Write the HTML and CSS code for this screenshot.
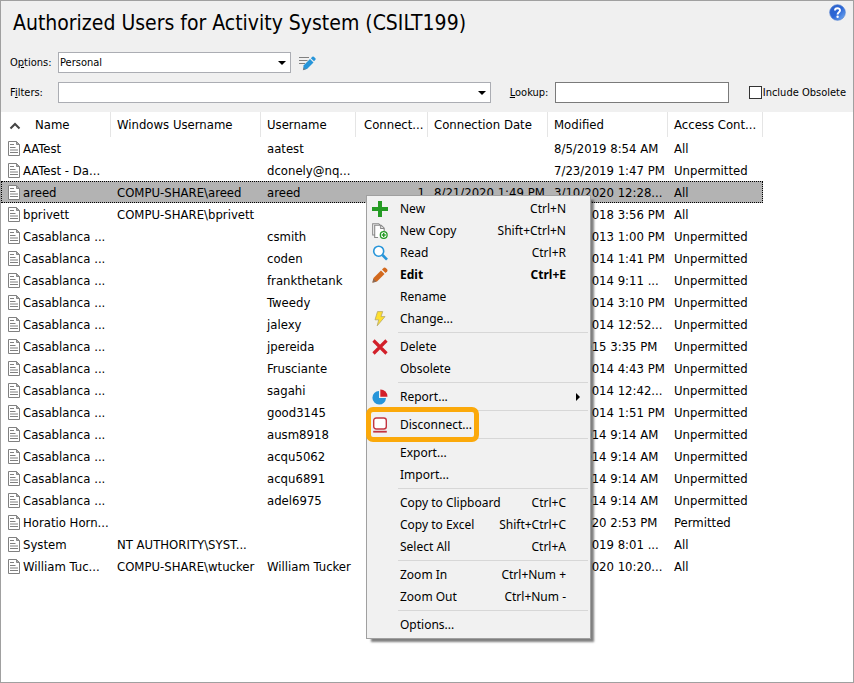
FILE: index.html
```html
<!DOCTYPE html>
<html lang="en">
<head>
<meta charset="utf-8">
<title>Authorized Users for Activity System (CSILT199)</title>
<link rel="stylesheet" href="styles.css">
</head>
<body>

<svg class="sprite" aria-hidden="true">
  <symbol id="doc" viewBox="0 0 12 15">
    <path d="M.5.5h8l3 3v11H.5z" fill="#fff" stroke="#808080"/>
    <path d="M8.500.5v3h3z" fill="#aaa" stroke="#888"/>
    <path d="M2 3.500h4M2 6.500h5.500M2 9h8M2 11.500h8" stroke="#808080"/>
  </symbol>
</svg>

<header class="header">
  <div class="title-row">
    <h1>Authorized Users for Activity System (CSILT199)</h1>
    <button class="icon-button help" type="button" aria-label="Help">
      <svg width="17" height="17" viewBox="0 0 17 17">
        <defs>
          <linearGradient id="ball" x1="0" y1="0" x2="1" y2="1">
            <stop offset="0" stop-color="#2e62c8"/>
            <stop offset="0.5" stop-color="#2b66d6"/>
            <stop offset="1" stop-color="#7db4f5"/>
          </linearGradient>
        </defs>
        <circle cx="8.5" cy="8.5" r="7.8" fill="url(#ball)" stroke="#4a7bd0" stroke-width=".7"/>
        <path d="M6 6.600C6 3.400 11 3.500 11 6.400C11 8.300 8.600 8.200 8.600 10.400" fill="none" stroke="#fff" stroke-width="2"/>
        <circle cx="8.600" cy="12.700" r="1.200" fill="#fff"/>
      </svg>
    </button>
  </div>

  <div class="form-row">
    <label class="row-label" for="options">O<u>p</u>tions:</label>
    <span class="combo combo-options">
      <select id="options"><option>Personal</option></select>
    </span>
    <button class="icon-button" type="button" aria-label="Edit options">
      <svg width="18" height="16" viewBox="0 0 18 16">
        <path d="M0 2.500h10M0 5.500h8.500M0 8.500h6" stroke="#808080" stroke-width="1.200"/>
        <path d="M4.500 10.500L11 4l3.500 3.500L8 14l-3.700.8z" fill="#2795d9"/>
        <path d="M11.800 3.200l1.500-1.500q.8-.6 1.500 0l1.600 1.600q.7.800 0 1.500l-1.400 1.500z" fill="#2795d9"/>
        <path d="M3.800 15.200l.8-3 2.200 2.200z" fill="#6b7f8c"/>
      </svg>
    </button>
  </div>

  <div class="form-row">
    <label class="row-label" for="filters">F<u>i</u>lters:</label>
    <span class="combo combo-filters">
      <select id="filters"><option></option></select>
    </span>
    <label class="lookup-label" for="lookup"><u>L</u>ookup:</label>
    <input class="lookup" id="lookup" type="text">
    <label class="check"><input type="checkbox">Include Obsolete</label>
  </div>
</header>

<main class="list">
  <table class="users">
    <colgroup>
      <col class="c-name"><col class="c-windows"><col class="c-user"><col class="c-count">
      <col class="c-date"><col class="c-date"><col class="c-access">
    </colgroup>
    <thead>
      <tr>
        <th class="sorted"><svg width="12" height="8" viewBox="0 0 12 8"><path d="M1.500 6.500L6 2l4.500 4.500" fill="none" stroke="#444" stroke-width="2"/></svg>Name</th>
        <th>Windows Username</th>
        <th>Username</th>
        <th class="count-head">Connect...</th>
        <th>Connection Date</th>
        <th>Modified</th>
        <th>Access Cont...</th>
      </tr>
    </thead>
    <tbody>
      <tr><td><svg class="doc"><use href="#doc"/></svg>AATest</td><td></td><td>aatest</td><td class="num"></td><td></td><td>8/5/2019 8:54 AM</td><td>All</td></tr>
      <tr><td><svg class="doc"><use href="#doc"/></svg>AATest - Da...</td><td></td><td>dconely@nq...</td><td class="num"></td><td></td><td>7/23/2019 1:47 PM</td><td>Unpermitted</td></tr>
      <tr class="selected"><td><svg class="doc"><use href="#doc"/></svg>areed</td><td>COMPU-SHARE\areed</td><td>areed</td><td class="num">1</td><td>8/21/2020 1:49 PM</td><td>3/10/2020 12:28...</td><td>All</td></tr>
      <tr><td><svg class="doc"><use href="#doc"/></svg>bprivett</td><td>COMPU-SHARE\bprivett</td><td></td><td class="num"></td><td></td><td>5/15/2018 3:56 PM</td><td>All</td></tr>
      <tr><td><svg class="doc"><use href="#doc"/></svg>Casablanca ...</td><td></td><td>csmith</td><td class="num"></td><td></td><td>8/12/2013 1:00 PM</td><td>Unpermitted</td></tr>
      <tr><td><svg class="doc"><use href="#doc"/></svg>Casablanca ...</td><td></td><td>coden</td><td class="num"></td><td></td><td>4/22/2014 1:41 PM</td><td>Unpermitted</td></tr>
      <tr><td><svg class="doc"><use href="#doc"/></svg>Casablanca ...</td><td></td><td>frankthetank</td><td class="num"></td><td></td><td>9/14/2014 9:11 ...</td><td>Unpermitted</td></tr>
      <tr><td><svg class="doc"><use href="#doc"/></svg>Casablanca ...</td><td></td><td>Tweedy</td><td class="num"></td><td></td><td>4/22/2014 3:10 PM</td><td>Unpermitted</td></tr>
      <tr><td><svg class="doc"><use href="#doc"/></svg>Casablanca ...</td><td></td><td>jalexy</td><td class="num"></td><td></td><td>4/22/2014 12:52...</td><td>Unpermitted</td></tr>
      <tr><td><svg class="doc"><use href="#doc"/></svg>Casablanca ...</td><td></td><td>jpereida</td><td class="num"></td><td></td><td>6/4/2015 3:35 PM</td><td>Unpermitted</td></tr>
      <tr><td><svg class="doc"><use href="#doc"/></svg>Casablanca ...</td><td></td><td>Frusciante</td><td class="num"></td><td></td><td>4/22/2014 4:43 PM</td><td>Unpermitted</td></tr>
      <tr><td><svg class="doc"><use href="#doc"/></svg>Casablanca ...</td><td></td><td>sagahi</td><td class="num"></td><td></td><td>4/22/2014 12:42...</td><td>Unpermitted</td></tr>
      <tr><td><svg class="doc"><use href="#doc"/></svg>Casablanca ...</td><td></td><td>good3145</td><td class="num"></td><td></td><td>4/22/2014 1:51 PM</td><td>Unpermitted</td></tr>
      <tr><td><svg class="doc"><use href="#doc"/></svg>Casablanca ...</td><td></td><td>ausm8918</td><td class="num"></td><td></td><td>5/6/2014 9:14 AM</td><td>Unpermitted</td></tr>
      <tr><td><svg class="doc"><use href="#doc"/></svg>Casablanca ...</td><td></td><td>acqu5062</td><td class="num"></td><td></td><td>5/6/2014 9:14 AM</td><td>Unpermitted</td></tr>
      <tr><td><svg class="doc"><use href="#doc"/></svg>Casablanca ...</td><td></td><td>acqu6891</td><td class="num"></td><td></td><td>5/6/2014 9:14 AM</td><td>Unpermitted</td></tr>
      <tr><td><svg class="doc"><use href="#doc"/></svg>Casablanca ...</td><td></td><td>adel6975</td><td class="num"></td><td></td><td>5/6/2014 9:14 AM</td><td>Unpermitted</td></tr>
      <tr><td><svg class="doc"><use href="#doc"/></svg>Horatio Horn...</td><td></td><td></td><td class="num"></td><td></td><td>3/9/2020 2:53 PM</td><td>Permitted</td></tr>
      <tr><td><svg class="doc"><use href="#doc"/></svg>System</td><td>NT AUTHORITY\SYST...</td><td></td><td class="num"></td><td></td><td>9/15/2019 8:01 ...</td><td>All</td></tr>
      <tr><td><svg class="doc"><use href="#doc"/></svg>William Tuc...</td><td>COMPU-SHARE\wtucker</td><td>William Tucker</td><td class="num"></td><td></td><td>3/10/2020 10:20...</td><td>All</td></tr>
    </tbody>
  </table>
</main>

<div class="menu" role="menu">
  <button class="item" role="menuitem">
    <span class="glyph"><svg width="16" height="16" viewBox="0 0 16 16"><path d="M6 0h4v6h6v4h-6v6H6v-6H0V6h6z" fill="#259b24"/></svg></span>
    <span class="text">New</span><span class="keys">Ctrl+N</span>
  </button>
  <button class="item" role="menuitem">
    <span class="glyph"><svg width="16" height="16" viewBox="0 0 16 16">
      <path d="M.7.7h6.600v4h4V14H2.700V12H.7z" fill="#fff"/>
      <path d="M2.500 12H.7V.7h6l1.500 1.500M6 14.500H2.700V2.200h6.500l3 3V8M8.700 2.200v3.300h3.500" fill="none" stroke="#888" stroke-width="1.100"/>
      <circle cx="11.700" cy="12" r="3.400" fill="#fff" stroke="#259b24" stroke-width="1.300"/>
      <path d="M11.700 10v4M9.700 12h4" stroke="#259b24" stroke-width="1.400"/>
    </svg></span>
    <span class="text">New Copy</span><span class="keys">Shift+Ctrl+N</span>
  </button>
  <button class="item" role="menuitem">
    <span class="glyph"><svg width="16" height="16" viewBox="0 0 16 16">
      <circle cx="6.700" cy="6.200" r="5" fill="#fff" stroke="#2795d9" stroke-width="1.600"/>
      <path d="M10.500 10l4.500 4.700" stroke="#2795d9" stroke-width="2.600"/>
    </svg></span>
    <span class="text">Read</span><span class="keys">Ctrl+R</span>
  </button>
  <button class="item default" role="menuitem">
    <span class="glyph"><svg width="16" height="16" viewBox="0 0 16 16">
      <path d="M1.500 11l7.500-7.500 3.500 3.500L5 14.500l-4.500 1z" fill="#d2691e"/>
      <path d="M10 2.500L11.800.7q1-.7 2 .2l1.300 1.300q.9 1 .1 2L13.500 6z" fill="#d2691e"/>
      <path d="M.3 15.700l1-4 3.200 3z" fill="#8a6b58"/>
    </svg></span>
    <span class="text">Edit</span><span class="keys">Ctrl+E</span>
  </button>
  <button class="item" role="menuitem"><span class="glyph"></span><span class="text">Rename</span></button>
  <button class="item" role="menuitem">
    <span class="glyph"><svg width="16" height="16" viewBox="0 0 16 16">
      <path d="M5.500.6h5.200L9 5.600h4L5.200 14.800l1.500-6H3z" fill="#ffe02e" stroke="#b5a76a" stroke-width=".8"/>
    </svg></span>
    <span class="text">Change...</span>
  </button>
  <hr>
  <button class="item" role="menuitem">
    <span class="glyph"><svg width="16" height="16" viewBox="0 0 16 16"><path d="M1.500 1.500l13 13M14.500 1.500l-13 13" stroke="#d2202a" stroke-width="3.200"/></svg></span>
    <span class="text">Delete</span>
  </button>
  <button class="item" role="menuitem"><span class="glyph"></span><span class="text">Obsolete</span></button>
  <hr>
  <button class="item" role="menuitem" aria-haspopup="true">
    <span class="glyph"><svg width="16" height="16" viewBox="0 0 16 16">
      <path d="M7 2v7h7A6.800 6.800 0 1 1 7 2z" fill="#2795d9"/>
      <path d="M8.300.5A7 7 0 0 1 15.500 7.700H8.300z" fill="#d2202a"/>
    </svg></span>
    <span class="text">Report...</span><span class="arrow"></span>
  </button>
  <hr>
  <button class="item marked" role="menuitem">
    <span class="glyph"><svg width="16" height="16" viewBox="0 0 16 16">
      <rect x="1.700" y="1" width="12.600" height="11" rx="2.500" fill="#fff" stroke="#c43540" stroke-width="1.400"/>
      <path d="M1.200 14.700h13.600" stroke="#c43540" stroke-width="1.800"/>
    </svg></span>
    <span class="text">Disconnect...</span>
  </button>
  <hr>
  <button class="item" role="menuitem"><span class="glyph"></span><span class="text">Export...</span></button>
  <button class="item" role="menuitem"><span class="glyph"></span><span class="text">Import...</span></button>
  <hr>
  <button class="item" role="menuitem"><span class="glyph"></span><span class="text">Copy to Clipboard</span><span class="keys">Ctrl+C</span></button>
  <button class="item" role="menuitem"><span class="glyph"></span><span class="text">Copy to Excel</span><span class="keys">Shift+Ctrl+C</span></button>
  <button class="item" role="menuitem"><span class="glyph"></span><span class="text">Select All</span><span class="keys">Ctrl+A</span></button>
  <hr>
  <button class="item" role="menuitem"><span class="glyph"></span><span class="text">Zoom In</span><span class="keys">Ctrl+Num +</span></button>
  <button class="item" role="menuitem"><span class="glyph"></span><span class="text">Zoom Out</span><span class="keys">Ctrl+Num -</span></button>
  <hr>
  <button class="item" role="menuitem"><span class="glyph"></span><span class="text">Options...</span></button>
</div>

</body>
</html>
```
FILE: styles.css
```css
*,
*::before,
*::after {
  box-sizing: border-box;
}

body {
  margin: 0;
  min-height: 100vh;
  border: 1px solid #a0a0a0;
  background-color: #fff;
  color: #000;
  font-family: Tahoma, "DejaVu Sans Condensed", "DejaVu Sans", sans-serif;
  font-stretch: condensed;
  font-size: 13px;
}

.sprite {
  display: none;
}

button,
input,
select {
  margin: 0;
  font: inherit;
  color: inherit;
}

/* header */
.header {
  display: flex;
  flex-direction: column;
  gap: 9px;
  padding: 3px 7px 9px 9px;
  background-color: #f0f0f0;
  font-size: 11px;
}

.title-row {
  display: flex;
  justify-content: space-between;
  align-items: flex-start;
  height: 39px;
}

h1 {
  margin: 0;
  padding-left: 3px;
  font-size: 21px;
  font-weight: normal;
  line-height: 39px;
}

.icon-button {
  display: flex;
  padding: 0;
  border: 0;
  background: none;
}

.form-row {
  display: flex;
  align-items: center;
  height: 21px;
}

.row-label {
  width: 48px;
}

.combo {
  position: relative;
  display: flex;
}

.combo::after {
  content: "";
  position: absolute;
  right: 5px;
  top: 9px;
  border: 4px solid transparent;
  border-top-color: #000;
  border-bottom: 0;
  pointer-events: none;
}

.combo-options {
  width: 233px;
  margin-right: 8px;
}

.combo-filters {
  flex: 1;
}

.combo select {
  width: 100%;
  height: 21px;
  padding: 0 1px;
  border: 1px solid #abadb3;
  border-radius: 0;
  background-color: #fff;
  appearance: none;
}

.lookup-label {
  width: 45px;
  margin-left: 19px;
}

.lookup {
  width: 174px;
  height: 21px;
  padding: 0 2px;
  border: 1px solid #7a7a7a;
  background-color: #fff;
}

.check {
  display: flex;
  align-items: center;
  gap: 1px;
  margin-left: 20px;
  white-space: nowrap;
}

.check input {
  width: 13px;
  height: 13px;
  border: 1px solid #333;
  background-color: #fff;
  appearance: none;
}

/* user list */
.users {
  width: 762px;
  border-collapse: separate;
  border-spacing: 0;
  table-layout: fixed;
}

.c-name { width: 110px; }
.c-windows { width: 150px; }
.c-user { width: 95px; }
.c-count { width: 72px; }
.c-date { width: 120px; }
.c-access { width: 95px; }

.users th,
.users td {
  padding: 0 0 0 6px;
  overflow: hidden;
  text-align: left;
  font-weight: normal;
  white-space: nowrap;
}

.users th {
  height: 25px;
  border-right: 1px solid #e5e5e5;
}

.users th.count-head {
  padding-left: 8px;
}

.users td {
  height: 22px;
}

.users td:first-child {
  padding-left: 7px;
}

.users td.num {
  padding-right: 3px;
  text-align: right;
}

.users th.sorted {
  padding-left: 8px;
}

.sorted svg {
  margin-right: 14px;
  vertical-align: middle;
}

.doc {
  width: 12px;
  height: 15px;
  margin-right: 3px;
  vertical-align: -3px;
}

.selected {
  background-color: #b3b3b3;
  outline: 1px dotted #000;
  outline-offset: -1px;
}

/* context menu */
.menu {
  position: absolute;
  left: 366px;
  top: 195px;
  width: 225px;
  padding: 2px;
  border: 1px solid #a0a0a0;
  background-color: #f1f1f1;
  box-shadow: 4px 4px 2px -1px rgba(0, 0, 0, 0.5);
  font-family: "Segoe UI", "Noto Sans", sans-serif;
  font-size: 12px;
}

.menu hr {
  height: 1px;
  margin: 2px 0 3px 29px;
  border: 0;
  background-color: #d7d7d7;
}

.item {
  position: relative;
  display: flex;
  align-items: center;
  width: 100%;
  height: 22px;
  padding: 0 22px 0 3px;
  border: 0;
  background: none;
  line-height: 16px;
  text-align: left;
  white-space: nowrap;
}

.glyph {
  display: flex;
  width: 28px;
}

.text {
  flex: 1;
}

.default {
  font-weight: bold;
}

.arrow {
  position: absolute;
  right: 8px;
  border: 4px solid transparent;
  border-left-color: #000;
  border-right: 0;
}

.marked::after {
  content: "";
  position: absolute;
  left: -3px;
  top: -7px;
  width: 113px;
  height: 35px;
  border: 5px solid #fba90a;
  border-radius: 7px;
}
```
